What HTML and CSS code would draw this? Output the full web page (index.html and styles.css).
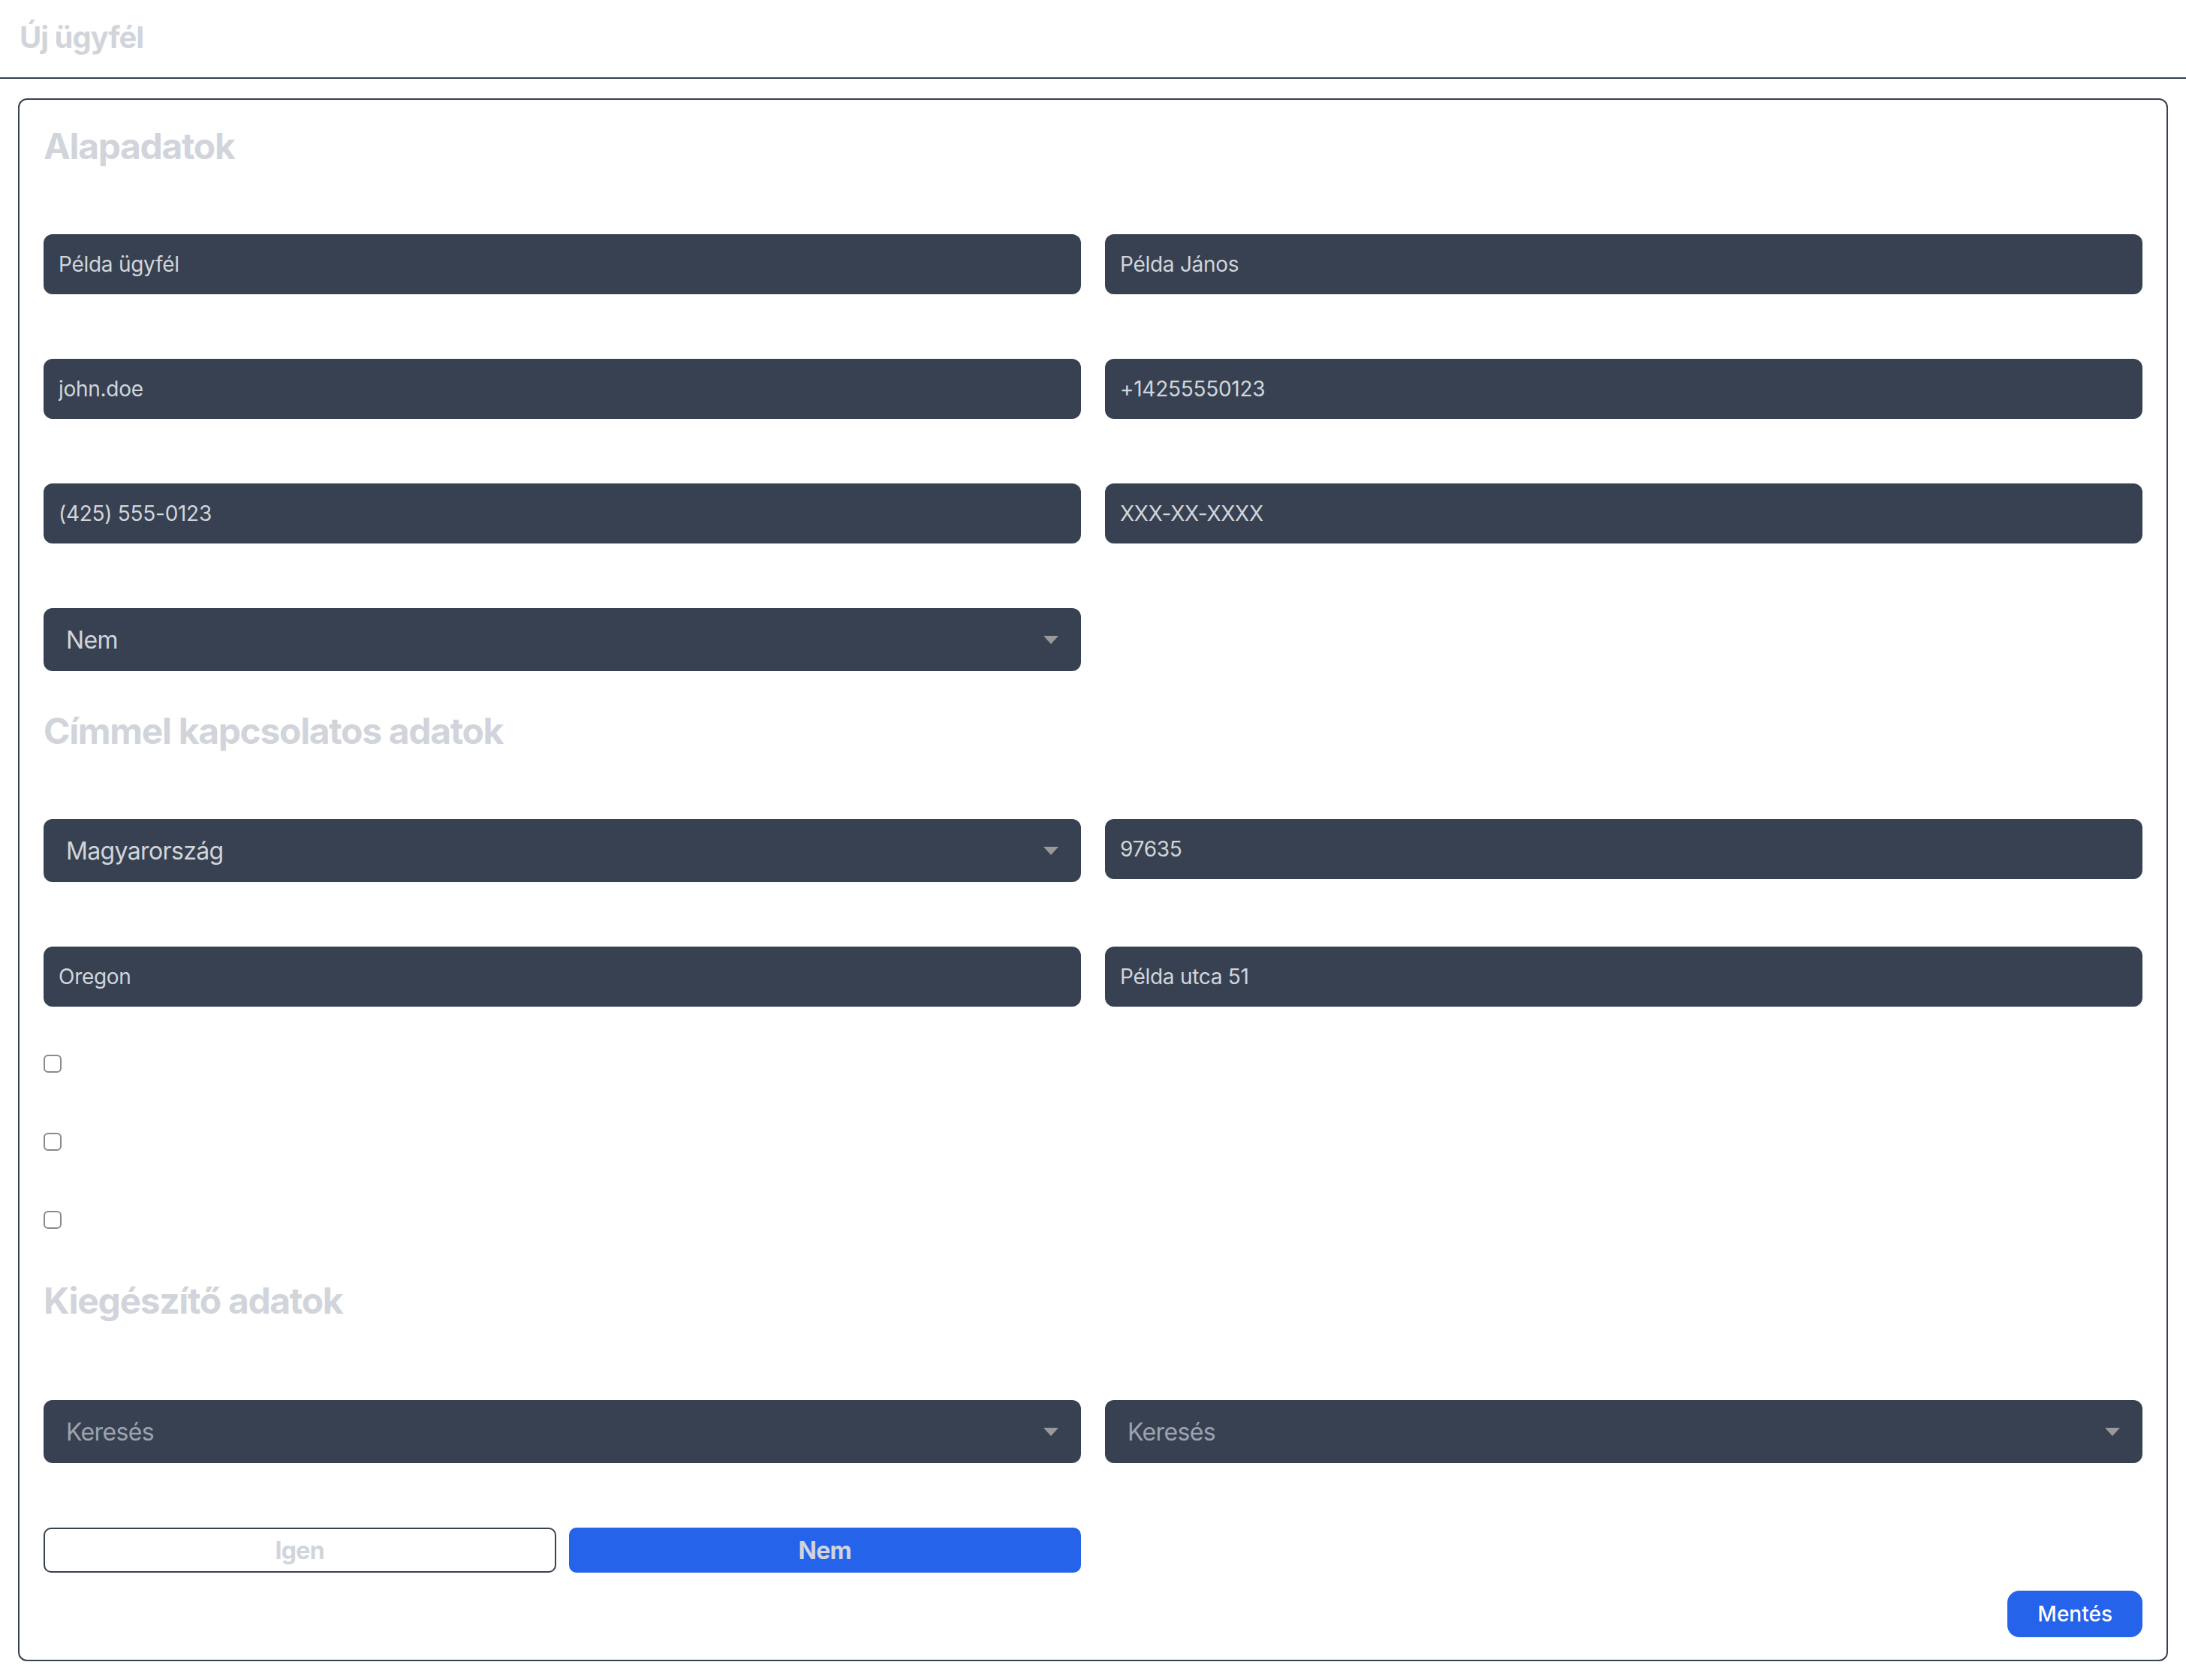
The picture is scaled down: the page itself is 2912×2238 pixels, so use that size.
FILE: index.html
```html
<!DOCTYPE html>
<html lang="hu">
  <head>
    <meta charset="UTF-8" />
    <meta name="viewport" content="width=device-width, initial-scale=1.0" />
    <title>Új ügyfél</title>

    <link rel="stylesheet" href="styles.css">
  </head>
  <body>
    <div class="topbar">
      <h1>Új ügyfél</h1>
    </div>

    <form class="card">
      <h2 class="section-title">Alapadatok</h2>
      <div class="fields">
        <input class="field" type="text" value="Példa ügyfél" />
        <input class="field" type="text" value="Példa János" />
        <input class="field" type="text" value="john.doe" />
        <input class="field" type="text" value="+14255550123" />
        <input class="field" type="text" value="(425) 555-0123" />
        <input class="field" type="text" value="XXX-XX-XXXX" />
        <div class="select">
          <select>
            <option>Nem</option>
            <option>Igen</option>
          </select>
        </div>
      </div>

      <h2 class="section-title second">Címmel kapcsolatos adatok</h2>
      <div class="fields">
        <div class="select">
          <select>
            <option>Magyarország</option>
          </select>
        </div>
        <input class="field" type="text" value="97635" />
        <input class="field" type="text" value="Oregon" />
        <input class="field" type="text" value="Példa utca 51" />
      </div>

      <div class="checks">
        <input type="checkbox" />
        <input type="checkbox" />
        <input type="checkbox" />
      </div>

      <h2 class="section-title third">Kiegészítő adatok</h2>
      <div class="fields">
        <div class="select">
          <select class="empty">
            <option>Keresés</option>
          </select>
        </div>
        <div class="select">
          <select class="empty">
            <option>Keresés</option>
          </select>
        </div>
        <div class="toggle">
          <button type="button" class="toggle-btn">Igen</button>
          <button type="button" class="toggle-btn active">Nem</button>
        </div>
      </div>

      <div class="actions">
        <button type="submit" class="save">Mentés</button>
      </div>
    </form>
  </body>
</html>
```

FILE: styles.css
```css
body {
  margin: 0;
  font-family: Inter, "Noto Sans", sans-serif;
  background-color: #ffffff;
}

.topbar {
  padding: 22px 26px 25px;
  border-bottom: 2px solid #374151;
}

h1 {
  margin: 0;
  font-size: 40px;
  line-height: 56px;
  font-weight: 700;
  letter-spacing: -0.025em;
  color: #d1d5db;
}

.card {
  margin: 26px 24px 0;
  padding: 30px 32px;
  border: 2px solid #374151;
  border-radius: 12px;
}

.section-title {
  margin: 0 0 85px;
  font-size: 48px;
  line-height: 64px;
  font-weight: 700;
  letter-spacing: -0.028em;
  color: #d1d5db;
}

.second {
  margin-top: 48px;
}

.third {
  margin-top: 64px;
  margin-bottom: 100px;
}

.fields {
  display: grid;
  grid-template-columns: 1fr 1fr;
  column-gap: 32px;
  row-gap: 86px;
  align-items: start;
}

.field {
  box-sizing: border-box;
  width: 100%;
  height: 80px;
  margin: 0;
  padding: 0 20px;
  border: none;
  border-radius: 12px;
  background-color: #374151;
  color: #d1d5db;
  font-family: inherit;
  font-size: 28px;
  letter-spacing: -0.01em;
  outline: none;
}

.select {
  position: relative;
}

.select select {
  box-sizing: border-box;
  width: 100%;
  height: 84px;
  margin: 0;
  padding: 0 30px;
  border: none;
  border-radius: 12px;
  background-color: #374151;
  color: #d1d5db;
  font-family: inherit;
  font-size: 32px;
  letter-spacing: -0.02em;
  appearance: none;
  -webkit-appearance: none;
  outline: none;
}

.select select.empty {
  color: #9ca3af;
}

/* small grey caret on the right of each dropdown */
.select::after {
  content: "";
  position: absolute;
  top: 37px;
  right: 30px;
  border-left: 10px solid transparent;
  border-right: 10px solid transparent;
  border-top: 11px solid #999999;
  pointer-events: none;
}

.checks {
  display: flex;
  flex-direction: column;
  gap: 80px;
  margin-top: 64px;
}

.checks input {
  appearance: none;
  -webkit-appearance: none;
  display: block;
  width: 24px;
  height: 24px;
  margin: 0;
  border: 2px solid #8a8a8a;
  border-radius: 6px;
  background-color: #ffffff;
}

.toggle {
  display: grid;
  grid-template-columns: 1fr 1fr;
  gap: 17px;
}

.toggle-btn {
  height: 60px;
  margin: 0;
  border: 2px solid #374151;
  border-radius: 10px;
  background-color: #ffffff;
  color: #d1d5db;
  font-family: inherit;
  font-size: 32px;
  font-weight: 700;
  letter-spacing: -0.02em;
}

.toggle-btn.active {
  border-color: #2563eb;
  background-color: #2563eb;
  color: #d1d5db;
}

.actions {
  display: flex;
  justify-content: flex-end;
  margin-top: 24px;
}

.save {
  height: 62px;
  padding: 0 40px;
  border: none;
  border-radius: 16px;
  background-color: #2563eb;
  color: #ffffff;
  font-family: inherit;
  font-size: 28px;
  font-weight: 500;
}
```
